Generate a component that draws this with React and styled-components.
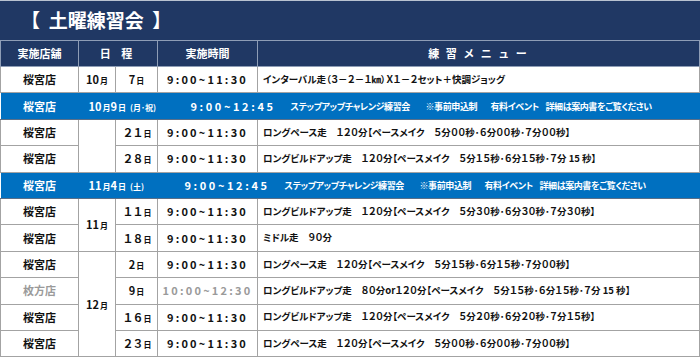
import React from 'react';
import styled, { createGlobalStyle } from 'styled-components';

const Global = createGlobalStyle`
  body {
    margin: 0;
    background: #fff;
    font-family: "Noto Sans CJK JP", "Noto Sans", sans-serif;
    font-weight: 700;
  }
`

const Sheet = styled.div`
  width: 700px;
  overflow: hidden;
`

const Title = styled.div`
  height: 39px;
  border-top: 1px solid #b8c2d0;
  background-color: #203864;
  color: #fff;
  font-size: 19px;
  font-weight: 700;
  line-height: 38px;
  padding-left: 21px;
  white-space: pre;
`

const Table = styled.table`
  width: 700px;
  table-layout: fixed;
  border-collapse: collapse;
  line-height: 1;
`

const HeadCell = styled.th`
  height: 25px;
  padding: 0;
  background-color: #203864;
  color: #fff;
  font-size: 11px;
  font-weight: 700;
  border: 1px solid #8e9db6;
  letter-spacing: ${p => p.$spacing || '0'};
`

const Cell = styled.td`
  height: 25.4px;
  padding: 0;
  border: 1px solid #a3a3a3;
  text-align: center;
  white-space: nowrap;
  font-size: 11px;
  color: ${p => (p.$muted ? '#9a9a9a' : '#111')};
`

const MenuCell = styled(Cell)`
  text-align: left;
  padding-left: 5px;
  font-size: 9.5px;
  font-feature-settings: "palt";
`

const Time = styled.span`
  letter-spacing: 2.2px;
  font-size: 11px;
`

const Small = styled.span`
  font-size: 8px;
  margin-left: 1px;
`

const EventRow = styled.tr`
  background-color: #0070c0;
`

const EventCell = styled.td`
  height: 25.4px;
  padding: 0;
  border-top: 1px solid #5a6f88;
  border-bottom: 1px solid #5a6f88;
  color: #fff;
`

const EventLine = styled.div`
  display: flex;
  align-items: center;
  white-space: nowrap;
  font-feature-settings: "palt";
`

const Slot = styled.span`
  flex: none;
  width: ${p => p.$w}px;
  text-align: ${p => (p.$center ? 'center' : 'left')};
  font-size: ${p => p.$size || 9}px;
  letter-spacing: ${p => p.$spacing ?? -0.4}px;
`

const Day = ({ n }) => (
  <>
    {n}
    <Small>日</Small>
  </>
)

const rows = [
  { store: '桜宮店', month: '10', span: 1, day: '7', time: '9:00~11:30', menu: 'インターバル走（３－２－１㎞）Ｘ１－２セット＋快調ジョッグ' },
  { event: true, date: ['10', '9', '(月･祝)'], time: '9:00~12:45', shift: 0 },
  { store: '桜宮店', month: '', span: 2, day: '２１', time: '9:00~11:30', menu: 'ロングペース走　１２０分【ペースメイク　５分００秒･６分００秒･７分００秒】' },
  { store: '桜宮店', day: '２８', time: '9:00~11:30', menu: 'ロングビルドアップ走　１２０分【ペースメイク　５分１５秒･６分１５秒･７分 15 秒】' },
  { event: true, date: ['11', '4', '(土)'], time: '9:00~12:45', shift: -6 },
  { store: '桜宮店', month: '11', span: 2, day: '１１', time: '9:00~11:30', menu: 'ロングビルドアップ走　１２０分【ペースメイク　５分３０秒･６分３０秒･７分３０秒】' },
  { store: '桜宮店', day: '１８', time: '9:00~11:30', menu: 'ミドル走　９０分' },
  { store: '桜宮店', month: '12', span: 4, day: '2', time: '9:00~11:30', menu: 'ロングペース走　１２０分【ペースメイク　５分１５秒･６分１５秒･７分００秒】' },
  { store: '枚方店', muted: true, day: '9', time: '10:00~12:30', menu: 'ロングビルドアップ走　８０分or１２０分【ペースメイク　５分１５秒･６分１５秒･７分 15 秒】' },
  { store: '桜宮店', day: '１６', time: '9:00~11:30', menu: 'ロングビルドアップ走　１２０分【ペースメイク　５分２０秒･６分２０秒･７分１５秒】' },
  { store: '桜宮店', day: '２３', time: '9:00~11:30', menu: 'ロングペース走　１２０分【ペースメイク　５分００秒･６分００秒･７分００秒】' },
]

function App() {
  return (
    <Sheet>
      <Global />
      <Title>{'【  土曜練習会  】'}</Title>
      <Table>
        <colgroup>
          <col style={{ width: 78 }} />
          <col style={{ width: 37 }} />
          <col style={{ width: 42 }} />
          <col style={{ width: 100 }} />
          <col />
        </colgroup>
        <thead>
          <tr>
            <HeadCell>実施店舗</HeadCell>
            <HeadCell colSpan={2} $spacing="4px">日 程</HeadCell>
            <HeadCell>実施時間</HeadCell>
            <HeadCell $spacing="2px">練 習 メ ニ ュ ー</HeadCell>
          </tr>
        </thead>
        <tbody>
          {rows.map((r, i) => {
            if (r.event) {
              return (
                <EventRow key={i}>
                  <EventCell colSpan={5}>
                    <EventLine>
                      <Slot $w={78} $center $size={11} $spacing={0}>桜宮店</Slot>
                      <Slot $w={102 + r.shift} $size={11} $spacing={0} style={{ paddingLeft: 10 }}>
                        {r.date[0]}<Small>月</Small>{r.date[1]}<Small>日</Small>
                        <Small style={{ marginLeft: 4 }}>{r.date[2]}</Small>
                      </Slot>
                      <Slot $w={100} $size={11} $spacing={2.6}>{r.time}</Slot>
                      <Slot $w={135}>ステップアップチャレンジ練習会</Slot>
                      <Slot $w={65}>※事前申込制</Slot>
                      <Slot $w={55}>有料イベント</Slot>
                      <Slot $w={140}>詳細は案内書をご覧ください</Slot>
                    </EventLine>
                  </EventCell>
                </EventRow>
              )
            }
            return (
              <tr key={i}>
                <Cell $muted={r.muted}>{r.store}</Cell>
                {r.span && (
                  <Cell rowSpan={r.span}>
                    {r.month && (
                      <>
                        {r.month}
                        <Small>月</Small>
                      </>
                    )}
                  </Cell>
                )}
                <Cell style={{ letterSpacing: r.day.length > 1 ? '-1px' : 0 }}>
                  <Day n={r.day} />
                </Cell>
                <Cell $muted={r.muted}>
                  <Time>{r.time}</Time>
                </Cell>
                <MenuCell>{r.menu}</MenuCell>
              </tr>
            )
          })}
        </tbody>
      </Table>
    </Sheet>
  )
}

export default App;
